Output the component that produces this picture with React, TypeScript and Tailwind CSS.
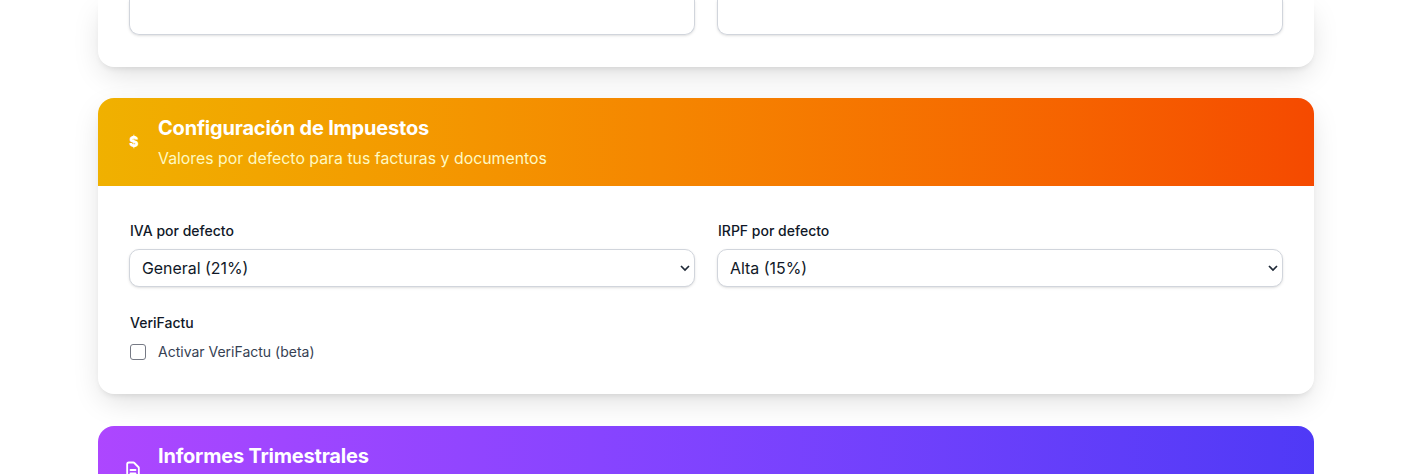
import React from "react";

function Field({ label, value }: { label: string; value: string }) {
  return (
    <div className="flex flex-col">
      <label className="mb-[8px] pl-px text-sm leading-[20px] font-medium text-gray-900">{label}</label>
      <div className="relative">
        <select
          defaultValue={value}
          className="h-[38px] w-full appearance-none rounded-[10px] border border-gray-300 bg-white pt-px pr-1 pl-3 text-[15.9px] text-gray-900 shadow-sm outline-none"
        >
          <option>{value}</option>
        </select>
        <svg
          width="10"
          height="7"
          viewBox="0 0 10 7"
          fill="none"
          stroke="#1f2937"
          strokeWidth="1.7"
          className="pointer-events-none absolute top-[16px] right-[5px]"
        >
          <path d="M1 1l4 4 4-4" />
        </svg>
      </div>
    </div>
  );
}

function Header({ gradient, icon, title, sub }: { gradient: string; icon: React.ReactNode; title: string; sub?: string }) {
  return (
    <header className={`flex h-[88px] items-center gap-[10px] pl-[22px] text-white ${gradient}`}>
      <div className="flex w-[28px] justify-center">{icon}</div>
      <div>
        <h2 className="text-[20px] leading-[28px] font-bold tracking-[-0.2px]">{title}</h2>
        <p className="mt-[5px] h-[23px] text-[15.85px] leading-[24px] text-yellow-100">{sub}</p>
      </div>
    </header>
  );
}

const cardShadow = "shadow-[0_10px_30px_-5px_rgba(0,0,0,0.15),0_4px_6px_-3px_rgba(0,0,0,0.1)]";

export default function App() {
  return (
    <div className="h-[474px] w-[1412px] overflow-hidden bg-white font-['Inter',sans-serif]">
      <div className="mx-auto flex w-[1216px] flex-col gap-[31px]">
        <section className={`rounded-b-2xl bg-white px-[31px] pb-[32px] ${cardShadow}`}>
          <div className="grid grid-cols-2 gap-[22px]">
            <div className="h-[35px] rounded-b-[10px] border border-t-0 border-gray-300 shadow-sm" />
            <div className="h-[35px] rounded-b-[10px] border border-t-0 border-gray-300 shadow-sm" />
          </div>
        </section>

        <section className={`overflow-hidden rounded-2xl bg-white ${cardShadow}`}>
          <Header
            gradient="bg-gradient-to-r from-yellow-500 to-orange-600"
            icon={<span className="text-sm leading-none font-black">$</span>}
            title="Configuración de Impuestos"
            sub="Valores por defecto para tus facturas y documentos"
          />
          <div className="px-[31px] pt-[35px] pb-[32px]">
            <div className="grid grid-cols-2 gap-[22px]">
              <Field label="IVA por defecto" value="General (21%)" />
              <Field label="IRPF por defecto" value="Alta (15%)" />
            </div>
            <div className="mt-[26px] pl-px">
              <div className="text-sm leading-[20px] font-medium text-gray-900">VeriFactu</div>
              <label className="mt-[9px] flex items-center gap-3 text-sm leading-[20px] text-gray-700">
                <input type="checkbox" className="h-4 w-4 appearance-none rounded-[3px] border border-[#767a85] bg-white" />
                Activar VeriFactu (beta)
              </label>
            </div>
          </div>
        </section>

        <section className="mt-px overflow-hidden rounded-t-2xl">
          <Header
            gradient="bg-gradient-to-r from-purple-500 to-indigo-600"
            icon={
              <svg width="20" height="20" viewBox="0 0 24 24" fill="none" stroke="white" strokeWidth="2.2" strokeLinecap="round" strokeLinejoin="round" className="mr-[2px]">
                <path d="M9 12h6m-6 4h6m2 5H7a2 2 0 0 1-2-2V5a2 2 0 0 1 2-2h5.586a1 1 0 0 1 .707.293l5.414 5.414a1 1 0 0 1 .293.707V19a2 2 0 0 1-2 2z" />
              </svg>
            }
            title="Informes Trimestrales"
          />
        </section>
      </div>
    </div>
  );
}
